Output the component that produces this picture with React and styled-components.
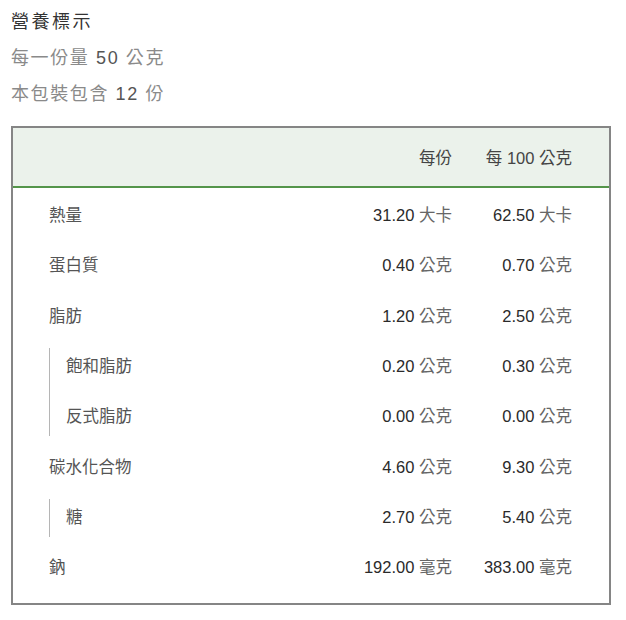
import React from 'react';
import styled, { createGlobalStyle } from 'styled-components';

const GlobalStyle = createGlobalStyle`
  body {
    margin: 0;
    background: #fff;
    font-family: "Liberation Sans", Arial, "Noto Sans CJK TC", sans-serif;
  }
`;

const Page = styled.div`
  padding: 11px 15px 0 11px;
`;

const Title = styled.div`
  font-size: 18px;
  color: #333;
  letter-spacing: 2.5px;
  line-height: 22px;
`;

const Meta = styled.div`
  font-size: 18px;
  color: #8a8a8a;
  letter-spacing: 1.6px;
  line-height: 22px;
  margin-top: 14px;

  b {
    font-weight: normal;
    color: #555;
  }
`;

const Box = styled.div`
  margin-top: 21px;
  border: 2px solid #858585;
  width: 596px;
`;

const Head = styled.div`
  display: flex;
  justify-content: flex-end;
  align-items: center;
  height: 58px;
  background: #ebf2eb;
  border-bottom: 2px solid #54954a;
  padding-right: 37px;
  font-size: 16.5px;
  color: #444;
`;

const Col = styled.div`
  width: ${({ w }) => w}px;
  text-align: right;
  white-space: nowrap;
`;

const Body = styled.div`
  padding: 1px 0 12px;
`;

const Row = styled.div`
  display: flex;
  align-items: center;
  height: 50.3px;
  padding: 0 37px 0 36px;
  font-size: 16.5px;
`;

const Label = styled.div`
  flex: 1;
  color: #555;
  padding-left: ${({ sub }) => (sub ? 17 : 0)}px;
`;

const Num = styled.span`
  color: #2a2a2a;
`;

const Unit = styled.span`
  color: #666;
`;

const Group = styled.div`
  position: relative;

  &::before {
    content: '';
    position: absolute;
    left: 36px;
    top: 8px;
    bottom: 4px;
    width: 1px;
    background: #b5b5b5;
  }
`;

const rows = [
  { name: '熱量', a: '31.20', b: '62.50', u: '大卡' },
  { name: '蛋白質', a: '0.40', b: '0.70', u: '公克' },
  { name: '脂肪', a: '1.20', b: '2.50', u: '公克' },
  {
    group: [
      { name: '飽和脂肪', a: '0.20', b: '0.30', u: '公克' },
      { name: '反式脂肪', a: '0.00', b: '0.00', u: '公克' },
    ],
  },
  { name: '碳水化合物', a: '4.60', b: '9.30', u: '公克' },
  { group: [{ name: '糖', a: '2.70', b: '5.40', u: '公克' }] },
  { name: '鈉', a: '192.00', b: '383.00', u: '毫克' },
];

function NutRow({ r, sub }) {
  return (
    <Row>
      <Label sub={sub}>{r.name}</Label>
      <Col w={150}>
        <Num>{r.a}</Num> <Unit>{r.u}</Unit>
      </Col>
      <Col w={120}>
        <Num>{r.b}</Num> <Unit>{r.u}</Unit>
      </Col>
    </Row>
  );
}

export default function App() {
  return (
    <Page>
      <GlobalStyle />
      <Title>營養標示</Title>
      <Meta>每一份量 <b>50</b> 公克</Meta>
      <Meta>本包裝包含 <b>12</b> 份</Meta>
      <Box>
        <Head>
          <Col w={80}>每份</Col>
          <Col w={120}>每 100 公克</Col>
        </Head>
        <Body>
          {rows.map((r, i) =>
            r.group ? (
              <Group key={i}>
                {r.group.map((g) => (
                  <NutRow key={g.name} r={g} sub />
                ))}
              </Group>
            ) : (
              <NutRow key={r.name} r={r} />
            )
          )}
        </Body>
      </Box>
    </Page>
  );
}
